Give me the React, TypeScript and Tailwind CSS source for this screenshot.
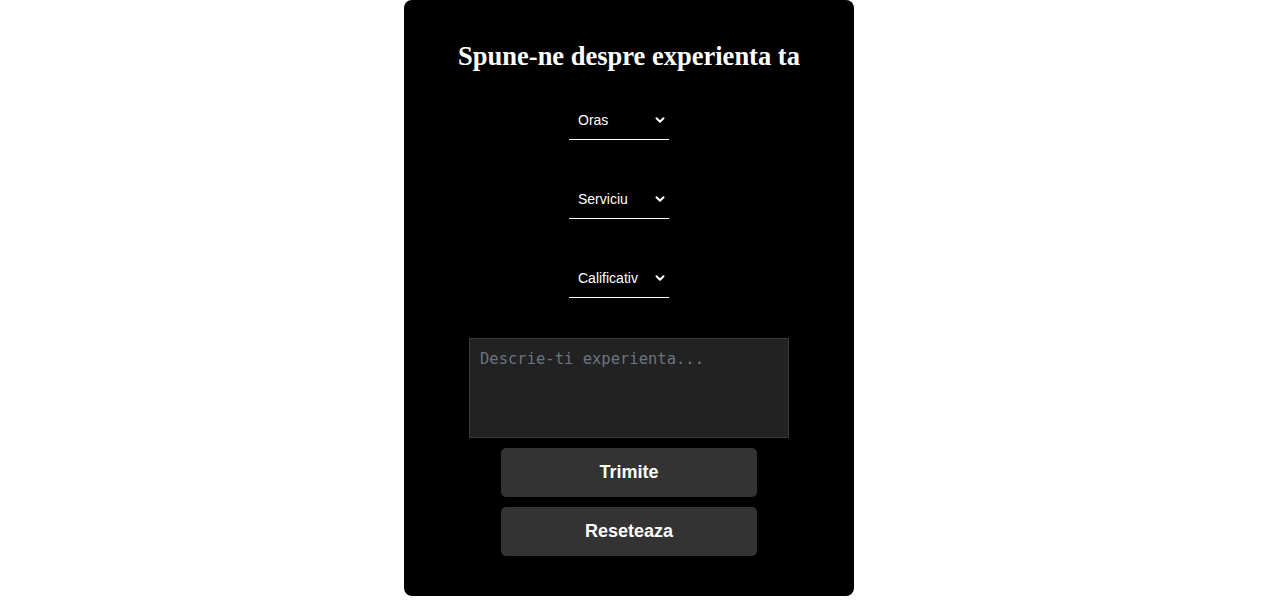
import { ChevronDown } from "lucide-react";

function FakeSelect({ label }: { label: string }) {
  return (
    <div className="w-[100px] h-10 flex items-center justify-between pl-[9px] pr-[2px] border-b border-white text-white text-[14px] font-['Liberation_Sans',Arial,sans-serif]">
      <span className="translate-y-[1px]">{label}</span>
      <ChevronDown size={14} strokeWidth={3.4} />
    </div>
  );
}

export default function App() {
  return (
    <div className="w-full bg-white min-h-[605px] pr-5">
      <div className="w-[450px] mx-auto bg-black rounded-lg pt-10 pb-10 flex flex-col items-center">
        <h2 className="text-white text-[26.5px] leading-8 font-bold font-['Liberation_Serif','Times_New_Roman',serif]">
          Spune-ne despre experienta ta
        </h2>
        <div className="mt-7 mr-5 flex flex-col items-center gap-[39px]">
          <FakeSelect label="Oras" />
          <FakeSelect label="Serviciu" />
          <FakeSelect label="Calificativ" />
        </div>
        <textarea
          placeholder="Descrie-ti experienta..."
          className="mt-10 w-[320px] h-[100px] bg-[#222222] border border-[#3a3a3a] px-[10px] py-[9px] text-[15.5px] text-white placeholder:text-[#6b7580] resize-none outline-none font-['DejaVu_Sans_Mono','Liberation_Mono',monospace]"
        />
        <button className="mt-[10px] w-64 h-[49px] rounded-[5px] bg-[#333333] text-white text-[18px] font-bold font-['Liberation_Sans',Arial,sans-serif]">
          Trimite
        </button>
        <button className="mt-[10px] w-64 h-[49px] rounded-[5px] bg-[#333333] text-white text-[18px] font-bold font-['Liberation_Sans',Arial,sans-serif]">
          Reseteaza
        </button>
      </div>
    </div>
  );
}
